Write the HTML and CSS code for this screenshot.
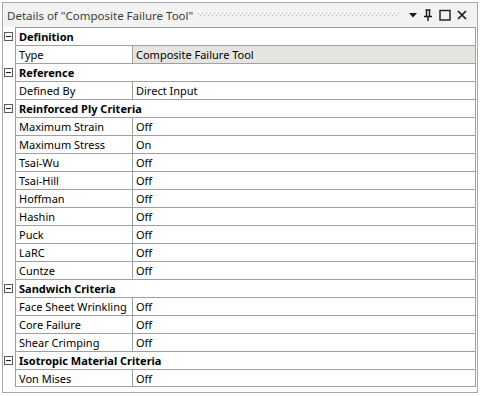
FILE: index.html
```html
<!DOCTYPE html>
<html>
<head>
<meta charset="utf-8">
<link rel="stylesheet" href="styles.css">
</head>
<body>
<div class="panel">
  <div class="titlebar">
    <span class="title">Details of "Composite Failure Tool"</span>
    <span class="grip"></span>
    <span class="tools">
      <svg class="ico" width="10" height="10" viewBox="0 0 10 10"><path d="M1 3 H9 L5 7.5 Z" fill="#1a1a1a"/></svg>
      <svg class="ico" width="12" height="12" viewBox="0 0 12 12"><path d="M3.5 1 H8.5 M4.5 1 V7.5 M7.5 1 V7.5 M2 7.5 H10 M6 7.5 V12" stroke="#1a1a1a" stroke-width="1.4" fill="none"/></svg>
      <svg class="ico" width="12" height="12" viewBox="0 0 12 12"><rect x="1" y="1.5" width="10" height="9.5" stroke="#1a1a1a" stroke-width="1.4" fill="none"/></svg>
      <svg class="ico" width="12" height="12" viewBox="0 0 12 12"><path d="M2 2 L10 10 M10 2 L2 10" stroke="#1a1a1a" stroke-width="1.7" fill="none"/></svg>
    </span>
  </div>
  <div class="grid">
    <div class="row cat"><span class="gut"><span class="box"></span></span><span class="cell">Definition</span></div>
    <div class="row"><span class="gut"></span><span class="name">Type</span><span class="val ro">Composite Failure Tool</span></div>
    <div class="row cat"><span class="gut"><span class="box"></span></span><span class="cell">Reference</span></div>
    <div class="row"><span class="gut"></span><span class="name">Defined By</span><span class="val">Direct Input</span></div>
    <div class="row cat"><span class="gut"><span class="box"></span></span><span class="cell">Reinforced Ply Criteria</span></div>
    <div class="row"><span class="gut"></span><span class="name">Maximum Strain</span><span class="val">Off</span></div>
    <div class="row"><span class="gut"></span><span class="name">Maximum Stress</span><span class="val">On</span></div>
    <div class="row"><span class="gut"></span><span class="name">Tsai-Wu</span><span class="val">Off</span></div>
    <div class="row"><span class="gut"></span><span class="name">Tsai-Hill</span><span class="val">Off</span></div>
    <div class="row"><span class="gut"></span><span class="name">Hoffman</span><span class="val">Off</span></div>
    <div class="row"><span class="gut"></span><span class="name">Hashin</span><span class="val">Off</span></div>
    <div class="row"><span class="gut"></span><span class="name">Puck</span><span class="val">Off</span></div>
    <div class="row"><span class="gut"></span><span class="name">LaRC</span><span class="val">Off</span></div>
    <div class="row"><span class="gut"></span><span class="name">Cuntze</span><span class="val">Off</span></div>
    <div class="row cat"><span class="gut"><span class="box"></span></span><span class="cell">Sandwich Criteria</span></div>
    <div class="row"><span class="gut"></span><span class="name">Face Sheet Wrinkling</span><span class="val">Off</span></div>
    <div class="row"><span class="gut"></span><span class="name">Core Failure</span><span class="val">Off</span></div>
    <div class="row"><span class="gut"></span><span class="name">Shear Crimping</span><span class="val">Off</span></div>
    <div class="row cat"><span class="gut"><span class="box"></span></span><span class="cell">Isotropic Material Criteria</span></div>
    <div class="row"><span class="gut"></span><span class="name">Von Mises</span><span class="val">Off</span></div>
  </div>
</div>
</body>
</html>
```
FILE: styles.css
```css
html, body {
  margin: 0;
  padding: 0;
  background: #ffffff;
}
body {
  font-family: "Noto Sans", "Open Sans", sans-serif;
  font-size: 11px;
  color: #000;
}
.panel {
  margin: 2px 0 0 2px;
  width: 474px;
  height: 389px;
  border: 1px solid #a9a9a9;
  background: #fff;
  box-sizing: content-box;
}
.titlebar {
  height: 24px;
  background: #f2f2f2;
  display: flex;
  align-items: center;
  padding-left: 4px;
  padding-right: 9px;
}
.title {
  color: #3c3c3c;
  font-size: 11.5px;
  white-space: nowrap;
}
.grip {
  flex: 1;
  height: 4px;
  margin: 0 8px 0 5px;
  background-image:
    radial-gradient(circle at 0.5px 0.5px, #b4b4b4 0.6px, transparent 0.7px),
    radial-gradient(circle at 2.5px 2.5px, #b4b4b4 0.6px, transparent 0.7px);
  background-size: 4px 4px;
}
.tools {
  display: flex;
  align-items: center;
  gap: 5px;
}
.tools .ico:first-child {
  margin-right: -1px;
}
.ico {
  display: block;
}
.grid {
  display: flex;
  flex-direction: column;
  margin-right: 1px;
  border-right: 1px solid #a0a0a0;
}
.row {
  display: flex;
  height: 18px;
}
.gut {
  width: 12px;
  flex: none;
  border-right: 1px solid #a0a0a0;
  display: flex;
  align-items: center;
  justify-content: center;
}
.box {
  width: 7px;
  height: 7px;
  border: 1px solid #5a5a5a;
  position: relative;
  margin-left: -1px;
}
.box::after {
  content: "";
  position: absolute;
  left: 1px;
  top: 3px;
  width: 5px;
  height: 1px;
  background: #1a1a1a;
}
.cell, .name, .val {
  border-top: 1px solid #a0a0a0;
  line-height: 17px;
  padding-left: 3px;
  white-space: nowrap;
  overflow: hidden;
}
.row:last-child .name, .row:last-child .val {
  border-bottom: 1px solid #a0a0a0;
}
.cell {
  flex: 1;
  font-weight: bold;
}
.name {
  width: 113px;
  flex: none;
  border-right: 1px solid #a0a0a0;
}
.val {
  flex: 1;
}
.val.ro {
  background: #e6e4e0;
}
```
